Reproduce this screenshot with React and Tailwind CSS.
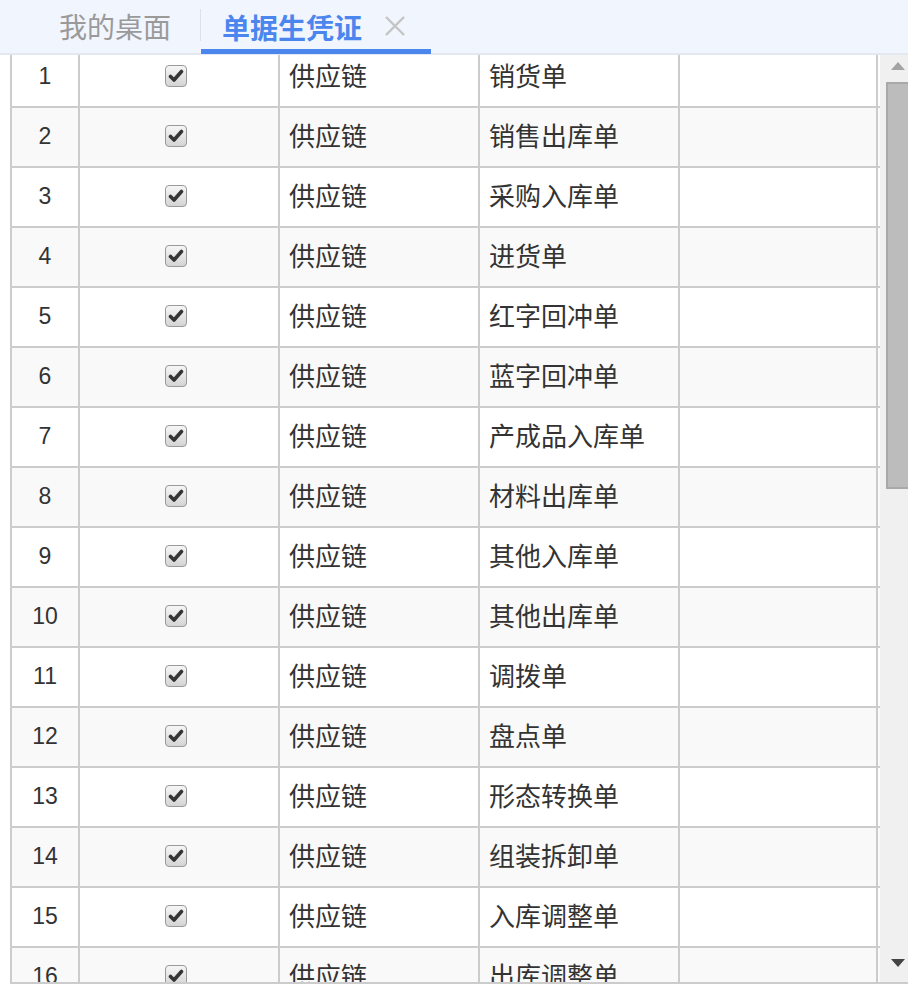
import React from "react";

const rows = [
  "销货单",
  "销售出库单",
  "采购入库单",
  "进货单",
  "红字回冲单",
  "蓝字回冲单",
  "产成品入库单",
  "材料出库单",
  "其他入库单",
  "其他出库单",
  "调拨单",
  "盘点单",
  "形态转换单",
  "组装拆卸单",
  "入库调整单",
  "出库调整单",
];

const cjk = "font-['Microsoft_YaHei','Noto_Sans_CJK_SC',sans-serif]";
const num = "font-['Liberation_Sans','Noto_Sans_CJK_SC',sans-serif]";

function CheckBox() {
  return (
    <div className="w-[22px] h-[22px] rounded-[4px] border border-[#9a9a9a] bg-gradient-to-b from-[#f6f6f6] to-[#d4d4d4] flex items-center justify-center">
      <svg width="16" height="14" viewBox="0 0 16 14">
        <path d="M2.5 7.5 L6 11 L13.5 2.5" fill="none" stroke="#353535" strokeWidth="3.6" strokeLinecap="round" strokeLinejoin="round" />
      </svg>
    </div>
  );
}

function Row({ index, name }) {
  const bg = index % 2 === 0 ? "bg-white" : "bg-[#f9f9f9]";
  return (
    <div className={`flex h-[60px] shrink-0 border-b-2 border-[#cccccc] ${bg}`}>
      <div className={`w-[66px] shrink-0 flex items-center justify-center pb-[2px] text-[23px] text-[#333] ${num}`}>
        {index + 1}
      </div>
      <div className="w-[200px] shrink-0 border-l-2 border-[#cccccc] flex items-center justify-center pr-[6px] pb-[3px]">
        <CheckBox />
      </div>
      <div className={`w-[200px] shrink-0 border-l-2 border-[#cccccc] flex items-center pl-[9px] pb-[5px] text-[26px] text-[#333] ${cjk}`}>
        供应链
      </div>
      <div className={`w-[200px] shrink-0 border-l-2 border-[#cccccc] flex items-center pl-[9px] pb-[5px] text-[26px] text-[#333] ${cjk}`}>
        {name}
      </div>
      <div className="w-[200px] shrink-0 border-l-2 border-r-2 border-[#cccccc]" />
    </div>
  );
}

export default function App() {
  return (
    <div className="w-[908px] h-[990px] bg-white overflow-hidden flex flex-col">
      {/* tab strip */}
      <div className="h-[55px] shrink-0 bg-[#f1f5fd] border-b-2 border-[#e3e8f1] flex items-end relative z-10">
        <div className={`w-[200px] h-full flex items-center pl-[59px] pb-[2px] text-[28px] text-[#9a9a9a] ${cjk}`}>
          我的桌面
        </div>
        <div className="w-px h-[32px] bg-[#dde2ea] self-center mb-[4px]" />
        <div className="w-[230px] h-full flex flex-col relative">
          <div className="flex-1 flex items-center pl-[21px] gap-[22px]">
            <span className={`text-[28px] font-bold text-[#4a86ee] ${cjk}`}>单据生凭证</span>
            <svg width="22" height="22" viewBox="0 0 22 22" className="mb-[2px]">
              <path d="M2 2 L20 20 M20 2 L2 20" stroke="#c4c4c4" strokeWidth="2.4" />
            </svg>
          </div>
          <div className="absolute left-0 right-0 bottom-[-1px] h-[5px] bg-[#4a86ee]" />
        </div>
      </div>

      {/* grid body */}
      <div className="flex h-[927px] shrink-0">
        <div className="w-[10px] shrink-0 bg-white" />
        <div className="w-[870px] shrink-0 border-l-2 border-[#cccccc] overflow-hidden">
          <div className="flex flex-col mt-[-7px]">
            {rows.map((name, i) => (
              <Row key={i} index={i} name={name} />
            ))}
          </div>
        </div>
        {/* vertical scrollbar */}
        <div className="w-[28px] shrink-0 bg-[#f0f0f0] flex flex-col">
          <div className="h-[27px] flex items-end justify-end pr-[2px]">
            <svg width="14" height="8" viewBox="0 0 14 8" className="mb-[12px] mr-[1px]">
              <path d="M7 0 L14 8 L0 8 Z" fill="#a3a3a3" />
            </svg>
          </div>
          <div className="ml-[6px] h-[407px] bg-[#bcbcbc] border-2 border-r-0 border-[#a9a9a9]" />
          <div className="flex-1" />
          <div className="h-[34px] flex items-start justify-end pr-[2px]">
            <svg width="14" height="8" viewBox="0 0 14 8" className="mt-[11px] mr-[1px]">
              <path d="M0 0 L14 0 L7 8 Z" fill="#444" />
            </svg>
          </div>
        </div>
      </div>
      <div className="ml-[10px] h-[2px] bg-[#cccccc] shrink-0" />
      <div className="flex-1 bg-white" />
    </div>
  );
}
